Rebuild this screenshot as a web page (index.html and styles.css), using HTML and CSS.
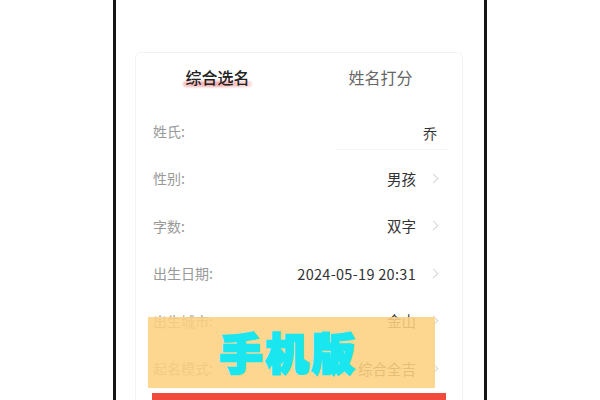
FILE: index.html
```html
<!DOCTYPE html>
<html lang="zh">
<head>
<meta charset="utf-8">
<link rel="stylesheet" href="styles.css">
</head>
<body>
<div class="stage">
  <div class="phone">
    <div class="card">
      <div class="tabs">
        <div class="tab active"><span>综合选名</span></div>
        <div class="tab"><span>姓名打分</span></div>
      </div>
      <div class="row">
        <span class="label">姓氏:</span>
        <span class="input">乔</span>
      </div>
      <div class="row">
        <span class="label">性别:</span>
        <span class="value">男孩</span><span class="chev"></span>
      </div>
      <div class="row">
        <span class="label">字数:</span>
        <span class="value">双字</span><span class="chev"></span>
      </div>
      <div class="row">
        <span class="label">出生日期:</span>
        <span class="value num">2024-05-19 20:31</span><span class="chev"></span>
      </div>
      <div class="row">
        <span class="label">出生城市:</span>
        <span class="value">金山</span><span class="chev"></span>
      </div>
      <div class="row">
        <span class="label">起名模式:</span>
        <span class="value">综合全吉</span><span class="chev"></span>
      </div>
      <div class="btn"></div>
    </div>
    <div class="watermark"><span>手机版</span></div>
  </div>
</div>
</body>
</html>
```

FILE: styles.css
```css
html, body {
  margin: 0;
  padding: 0;
  background: #ffffff;
  width: 600px;
  height: 400px;
  overflow: hidden;
  font-family: "Noto Sans CJK SC", "Noto Sans", sans-serif;
}
.stage {
  display: flex;
  justify-content: center;
  height: 400px;
}
.phone {
  position: relative;
  width: 368px;
  height: 400px;
  box-sizing: content-box;
  border-left: 3px solid #151515;
  border-right: 3px solid #151515;
  background: #fff;
  overflow: hidden;
}
.card {
  margin-top: 52px;
  margin-left: 19px;
  width: 328px;
  box-sizing: border-box;
  border: 1px solid #f3f3f3;
  border-bottom: none;
  border-radius: 6px 6px 0 0;
  background: #fff;
}
.tabs {
  display: flex;
  height: 54px;
}
.tab {
  flex: 1;
  display: flex;
  justify-content: center;
  padding-top: 12px;
  font-size: 16px;
  line-height: 24px;
  color: #666;
  box-sizing: border-box;
}
.tab span { position: relative; height: 24px; }
.tab.active span { color: #222; font-weight: 500; }
.tab.active span::after {
  content: "";
  position: absolute;
  left: -2px;
  right: -2px;
  top: 16px;
  height: 6px;
  border-radius: 3px;
  z-index: -1;
  filter: blur(1px);
  background: linear-gradient(90deg, rgba(238,120,120,0.45), rgba(238,120,120,0.6) 50%, rgba(238,140,140,0.3));
}
.tab.active span { z-index: 0; }
.row {
  display: flex;
  align-items: center;
  height: 47.5px;
  padding: 0 25px 0 17px;
  font-size: 14px;
}
.label {
  color: #999;
  flex: 1;
}
.value {
  color: #333;
  font-size: 14.5px;
}
.value.num {
  letter-spacing: 0.3px;
}
.input {
  color: #333;
  width: 101px;
  text-align: right;
  margin-right: -12px;
  padding-right: 12px;
  padding-top: 6px;
  padding-bottom: 6px;
  border-bottom: 1px solid #f4f4f4;
  margin-top: 6px;
}
.chev {
  width: 6px;
  height: 6px;
  border-top: 1.2px solid #d6d6d6;
  border-right: 1.2px solid #d6d6d6;
  transform: rotate(45deg);
  margin-left: 14px;
}
.btn {
  margin: 1px 16px 0 16px;
  height: 12px;
  background: #f04b3c;
}
.watermark {
  position: absolute;
  left: 32px;
  top: 317px;
  width: 287px;
  height: 71px;
  background: rgba(253, 208, 128, 0.88);
  display: flex;
  align-items: center;
  justify-content: center;
}
.watermark span {
  font-size: 43px;
  font-weight: 900;
  color: #1ae6f0;
  -webkit-text-stroke: 2.5px #1ae6f0;
  letter-spacing: 3px;
  line-height: 1;
  margin-left: -6px;
  margin-top: -2px;
  text-shadow: 0 0 2px rgba(80, 240, 245, 0.8);
}
```
